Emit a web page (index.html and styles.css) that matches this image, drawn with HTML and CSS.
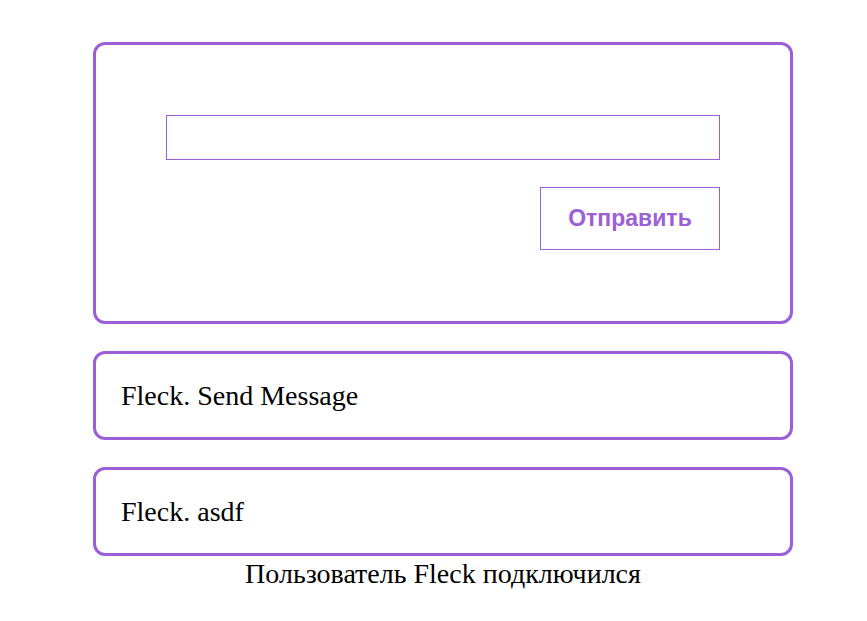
FILE: index.html
```html
<!DOCTYPE html>
<html lang="ru">
<head>
<meta charset="utf-8">
<title>Fleck</title>
<link rel="stylesheet" href="styles.css">
</head>
<body>
<main class="wrap">
  <section class="card composer">
    <input class="msg-input" type="text">
    <button class="send-btn" type="button">Отправить</button>
  </section>
  <div class="card message">Fleck. Send Message</div>
  <div class="card message">Fleck. asdf</div>
  <p class="status">Пользователь Fleck подключился</p>
</main>
</body>
</html>
```
FILE: styles.css
```css
html, body {
  margin: 0;
  padding: 0;
  background: #fff;
}
body {
  font-family: "Liberation Serif", "Times New Roman", serif;
}
.wrap {
  width: 700px;
  margin: 42px 0 0 93px;
  display: flex;
  flex-direction: column;
}
.card {
  box-sizing: border-box;
  border: 3px solid #9c5fd5;
  border-radius: 12px;
}
.composer {
  height: 282px;
  padding: 70px;
  display: flex;
  flex-direction: column;
  align-items: flex-end;
  gap: 27px;
}
.msg-input {
  box-sizing: border-box;
  width: 100%;
  height: 45px;
  border: 1px solid #9c5fd5;
  margin: 0;
  padding: 0 10px;
  outline: none;
  background: #fff;
}
.send-btn {
  box-sizing: border-box;
  width: 180px;
  height: 63px;
  border: 1px solid #9c5fd5;
  background: #fff;
  color: #9c5fd5;
  font-family: "Liberation Sans", Arial, sans-serif;
  font-weight: bold;
  font-size: 23px;
  margin: 0;
  padding: 0;
}
.message {
  margin-top: 27px;
  height: 89px;
  padding: 0 25px;
  display: flex;
  align-items: center;
  font-size: 28px;
  color: #000;
}
.status {
  margin: 0;
  text-align: center;
  font-size: 28px;
  line-height: 35px;
  color: #000;
}
```
